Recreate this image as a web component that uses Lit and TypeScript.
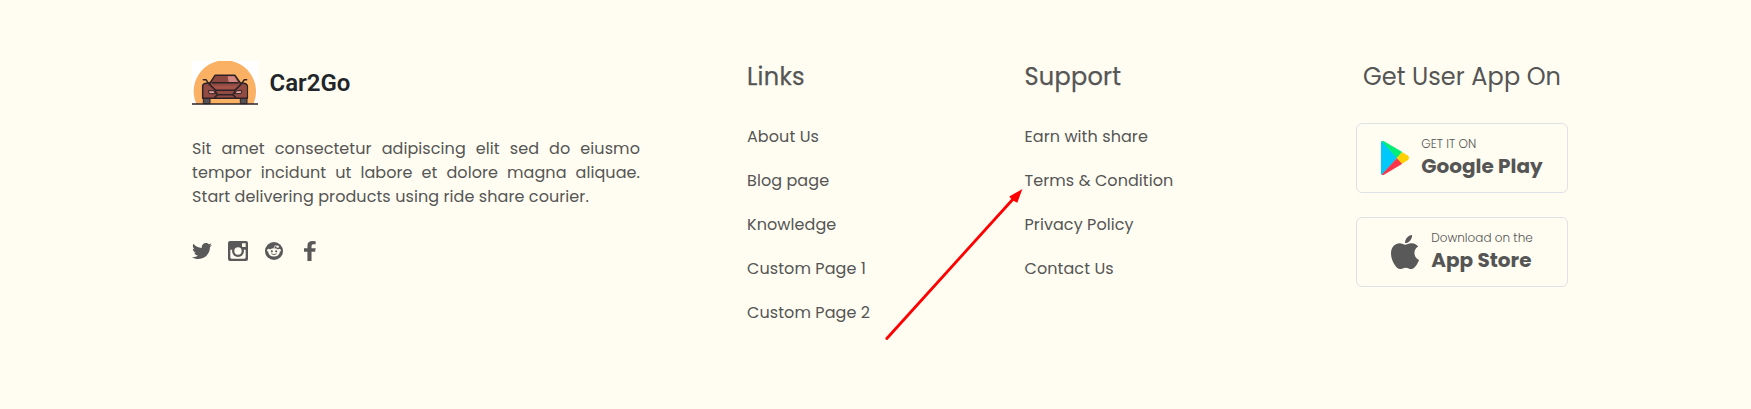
import { LitElement, html, css } from "lit";
import { customElement } from "lit/decorators.js";

const LINKS = ["About Us", "Blog page", "Knowledge", "Custom Page 1", "Custom Page 2"];
const SUPPORT = ["Earn with share", "Terms & Condition", "Privacy Policy", "Contact Us"];

const carLogo = html`<svg class="car" viewBox="36 33 198 132" preserveAspectRatio="none">
  <rect x="36" y="33" width="198" height="129" fill="#fff" />
  <path d="M49 162A93.5 93.5 0 1 1 220 162Z" fill="#fbb164" />
  <path d="M70 143h20v18H70zM181 143h20v18h-20z" fill="#555257" stroke="#2d2327" stroke-width="3" />
  <path d="M89 100L105 76H165L182 100L200 101V145H69V102Z" fill="#914b43" />
  <path d="M96 97L107 79H143V97Z" fill="#8d4940" />
  <path d="M143 79H163L174 97H146Z" fill="#d38780" />
  <path d="M91 107H180L165 121H106Z" fill="#a5544a" />
  <g fill="none" stroke="#2d2327" stroke-width="4.5" stroke-linejoin="round" stroke-linecap="round">
    <path d="M90 99L105 76H165L181 99" />
    <path d="M97 98H174" />
    <path d="M84 98L78 89H70M187 98L193 89H200" />
    <path d="M90 99Q70 98 68 107V145H202V107Q199 98 181 99" />
    <path d="M86 101L107 121H164L185 101" />
    <path d="M107 121V127L113 134M164 121V127L158 134M104 142L113 134H158L167 142" />
  </g>
  <path d="M85 122H101L106 131H88ZM186 122H170L165 131H183Z" fill="#e5a19b" stroke="#2d2327" stroke-width="3" />
  <path d="M36 162H234" stroke="#2d2327" stroke-width="4.5" />
</svg>`;

const twitter = html`<svg class="tw" viewBox="0 48 512 416" preserveAspectRatio="none"><path d="M459.37 151.716c.325 4.548.325 9.097.325 13.645 0 138.72-105.583 298.558-298.558 298.558-59.452 0-114.68-17.219-161.137-47.106 8.447.974 16.568 1.299 25.34 1.299 49.055 0 94.213-16.568 130.274-44.832-46.132-.975-84.792-31.188-98.112-72.772 6.498.974 12.995 1.624 19.818 1.624 9.421 0 18.843-1.3 27.614-3.573-48.081-9.747-84.143-51.98-84.143-102.985v-1.299c13.969 7.797 30.214 12.67 47.431 13.319-28.264-18.843-46.781-51.005-46.781-87.391 0-19.492 5.197-37.36 14.294-52.954 51.655 63.675 129.3 105.258 216.365 109.807-1.624-7.797-2.599-15.918-2.599-24.04 0-57.828 46.782-104.934 104.934-104.934 30.213 0 57.502 12.67 76.67 33.137 23.715-4.548 46.456-13.32 66.599-25.34-7.798 24.366-24.366 44.833-46.132 57.827 21.117-2.273 41.584-8.122 60.426-16.243-14.292 20.791-32.161 39.308-52.628 54.253z"/></svg>`;
const instagram = html`<svg class="ig" viewBox="0 0 60 60"><rect width="60" height="60" rx="6"/><path d="M42 7H53V18H42ZM7 26H53V49Q53 53 49 53H11Q7 53 7 49Z" fill="#fffdf1"/><circle cx="30" cy="30" r="18"/><circle cx="30" cy="30" r="11" fill="#fffdf1"/></svg>`;
const reddit = html`<svg class="rd" viewBox="0 0 54 54"><circle cx="27" cy="27" r="27"/><g fill="#fffdf1"><ellipse cx="27" cy="31" rx="17" ry="12.5"/><circle cx="11" cy="25" r="4.5"/><circle cx="43" cy="25" r="4.5"/><circle cx="38" cy="14" r="3.6"/></g><path d="M27 19L30 11L37 13" stroke="#fffdf1" stroke-width="2.2" fill="none"/><circle cx="20.5" cy="28" r="3.2"/><circle cx="33.5" cy="28" r="3.2"/><path d="M19 35Q27 41 35 35" fill="none" stroke="#595959" stroke-width="2.6"/></svg>`;
const facebook = html`<svg class="fb" viewBox="0 0 35 60" preserveAspectRatio="none"><path d="M34 1V10H27Q22 10 22 15V22H34L32.5 32H22V60H10V32H0V22H10V14Q10 0 25 0Q31 0 34 1Z"/></svg>`;
const play = html`<svg class="logo" viewBox="0 0 84 102" preserveAspectRatio="none"><path d="M0 5V97Q0 101 3 102L49 50L3 0Q0 1 0 5Z" fill="#00c8fa"/><path d="M2 1Q5-1 9 1L64 33L48 51Z" fill="#00ee76"/><path d="M2 101Q5 103 9 101L64 68L48 51Z" fill="#fb3449"/><path d="M63 33L81 44Q87 50 81 57L63 68L47 51Z" fill="#ffcf00"/></svg>`;
const apple = html`<svg class="logo" viewBox="4 32 376 448" preserveAspectRatio="none"><path fill="#595959" d="M318.7 268.7c-.2-36.7 16.4-64.4 50-84.8-18.8-26.9-47.2-41.7-84.7-44.6-35.5-2.8-74.3 20.7-88.5 20.7-15 0-49.4-19.7-76.4-19.7C63.3 141.2 4 184.8 4 273.5q0 39.3 14.4 81.2c12.8 36.7 59 126.7 107.2 125.2 25.2-.6 43-17.9 75.8-17.9 31.8 0 48.3 17.9 76.4 17.9 48.6-.7 90.4-82.5 102.6-119.3-65.2-30.7-61.7-90-61.7-91.9zm-56.6-164.2c27.3-32.4 24.8-61.9 24-72.5-24.1 1.4-52 16.4-67.9 34.9-17.5 19.8-27.8 44.3-25.6 71.9 26.1 2 49.9-11.4 69.5-34.3z"/></svg>`;

@customElement("app-root")
export class AppRoot extends LitElement {
  static styles = css`
    :host { display: block; font-family: Poppins, Inter, "Open Sans", sans-serif; color: #555; }
    .footer { box-sizing: border-box; position: relative; height: 409px; background: #fffdf1; padding: 61px 183px 0 192px;
      display: grid; grid-template-columns: 555px 277.5px 331.5px 212px; align-items: start; overflow: hidden; }
    .brand { display: flex; align-items: center; gap: 11.5px; height: 44px; }
    .car { width: 66px; height: 44px; display: block; }
    .name { font: 600 24px/44px Roboto, sans-serif; color: #212529; }
    .about { margin: 32px 0 0; width: 448px; font-size: 16px; line-height: 24px; text-align: justify; letter-spacing: 0.08px; }
    .social { display: flex; align-items: center; margin-top: 32px; height: 20px; fill: #595959; }
    .tw { width: 20px; height: 16px; margin-right: 16px; }
    .ig { width: 20px; height: 20px; margin-right: 17px; }
    .rd { width: 18px; height: 18px; margin-right: 21px; }
    .fb { width: 12px; height: 20px; }
    h3 { margin: 0; padding-top: 1px; font-size: 24px; line-height: 30px; font-weight: 400; white-space: nowrap; letter-spacing: 0.25px; -webkit-text-stroke: 0.25px #555; }
    ul { list-style: none; margin: 33px 0 0; padding: 0; display: flex; flex-direction: column; gap: 20px; }
    li { font-size: 16px; line-height: 24px; white-space: nowrap; letter-spacing: 0.08px; }
    .apps { display: flex; flex-direction: column; align-items: center; }
    .apps h3 { letter-spacing: 0.08px; -webkit-text-stroke: 0; }
    .store { box-sizing: border-box; width: 212px; height: 70px; border: 1px solid #dee2e6; border-radius: 6px; display: flex; align-items: center; justify-content: center; gap: 12px; margin-top: 24px; }
    .store.first { margin-top: 31px; }
    .logo { width: 28px; height: 34px; }
    .label { margin-top: -3px; }
    .small { font-size: 12px; font-weight: 300; line-height: 18px; }
    .big { font-size: 20px; font-weight: 700; line-height: 26px; }
    .arrow { position: absolute; left: 880px; top: 180px; width: 150px; height: 165px; }
  `;
  list(items: string[]) {
    return html`<ul>${items.map((i) => html`<li>${i}</li>`)}</ul>`;
  }
  store(logo: unknown, small: string, big: string, cls = "") {
    return html`<div class="store ${cls}">${logo}<div class="label"><div class="small">${small}</div><div class="big">${big}</div></div></div>`;
  }
  render() {
    return html`<footer class="footer">
      <section>
        <div class="brand">${carLogo}<span class="name">Car2Go</span></div>
        <p class="about">Sit amet consectetur adipiscing elit sed do eiusmo tempor incidunt ut labore et dolore magna aliquae. Start delivering products using ride share courier.</p>
        <div class="social">${twitter}${instagram}${reddit}${facebook}</div>
      </section>
      <section><h3>Links</h3>${this.list(LINKS)}</section>
      <section><h3>Support</h3>${this.list(SUPPORT)}</section>
      <section class="apps"><h3>Get User App On</h3>
        ${this.store(play, "GET IT ON", "Google Play", "first")}
        ${this.store(apple, "Download on the", "App Store")}
      </section>
      <svg class="arrow" viewBox="880 180 150 165">
        <path d="M886.8 338.5L1014 198" stroke="#f00" stroke-width="2.8" stroke-linecap="round" />
        <path d="M1022.4 189L1009.3 196.5L1012 200L1017.3 202.7Z" fill="#f00" />
      </svg>
    </footer>`;
  }
}
